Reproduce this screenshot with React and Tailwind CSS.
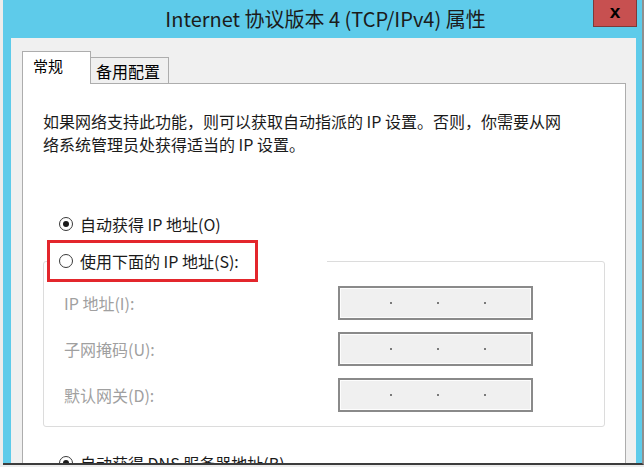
import React from 'react';

const font = { fontFamily: '"Noto Sans CJK SC", "Noto Sans", sans-serif' };

const Radio = ({ checked }) => (
  <span className="w-[14px] h-[14px] rounded-full border border-[#3a3a3a] bg-white flex items-center justify-center shrink-0">
    {checked && <span className="w-[6px] h-[6px] rounded-full bg-[#1a1a1a]"></span>}
  </span>
);

const IpBox = () => (
  <div className="w-[195px] h-[34px] border-2 border-[#8a8a8a] bg-[#f0f0f0] shadow-[inset_0_0_0_1px_#fdfdfd] flex items-center pl-[50px] gap-[45px]">
    <span className="w-[2px] h-[2px] bg-[#7a7a7a]"></span>
    <span className="w-[2px] h-[2px] bg-[#7a7a7a]"></span>
    <span className="w-[2px] h-[2px] bg-[#7a7a7a]"></span>
  </div>
);

export default function App() {
  const fields = ['IP 地址(I):', '子网掩码(U):', '默认网关(D):'];

  return (
    <div className="w-[644px] h-[467px] bg-[#ececec] flex flex-col pl-[3px] pb-[2px]" style={font}>
      <div className="flex-1 min-h-0 flex flex-col bg-[#5ecbea] border-b-2 border-r-2 border-b-[#3c3c3c] border-r-[#8f8f8f] overflow-hidden">
        {/* title bar */}
        <div className="h-[38px] shrink-0 grid grid-cols-[1fr_auto_1fr]">
          <div></div>
          <div className="flex items-center text-[20px] text-[#1b1b1b] pl-[6px]">Internet 协议版本 4 (TCP/IPv4) 属性</div>
          <div className="flex justify-end items-start pr-[5px]">
            <div className="w-[44px] h-[27px] bg-[#c75050] border border-t-0 border-[#7d3a3a] flex items-center justify-center text-[19px] font-bold text-black leading-none pb-[3px]" style={{ fontFamily: '"Liberation Sans", sans-serif' }}>x</div>
          </div>
        </div>

        {/* window body */}
        <div className="flex-1 min-h-0 ml-[8px] mr-[6px] bg-[#f0f0f0] pt-[13px] pl-[11px] pr-[10px] flex flex-col overflow-hidden">
          <div className="flex items-end -mb-px">
            <div className="relative z-10 w-[69px] h-[33px] bg-white border border-b-0 border-[#adadad] pl-[10px] pt-[3px] text-[15px] text-black">常规</div>
            <div className="w-[78px] h-[27px] bg-[#f0f0f0] border border-l-0 border-[#adadad] pl-[5px] pt-[1px] text-[16px] text-black">备用配置</div>
          </div>

          <div className="flex-1 bg-white border border-[#adadad] pt-[26px] pl-[20px] pr-[20px] text-[16px] text-[#1a1a1a]">
            <p className="leading-[23px]">
              如果网络支持此功能，则可以获取自动指派的 IP 设置。否则，你需要从网
              <br />
              络系统管理员处获得适当的 IP 设置。
            </p>

            <div className="mt-[56px] h-[24px] flex items-center gap-[7px] pl-[16px]">
              <Radio checked />
              <span>自动获得 IP 地址(O)</span>
            </div>

            <fieldset className="mt-[4px] border border-[#dcdcdc] rounded-[3px]">
              <legend className="ml-[3px] w-[280px]">
                <div className="w-[211px] h-[42px] border-[3px] border-[#e3262c] flex items-center gap-[7px] pl-[9px]">
                  <Radio />
                  <span>使用下面的 IP 地址(S):</span>
                </div>
              </legend>
              <div className="flex flex-col gap-[12px] pt-[4px] pl-[20px] pb-[14px]">
                {fields.map((f) => (
                  <div key={f} className="flex items-center">
                    <span className="w-[274px] text-[#a0a0a0]">{f}</span>
                    <IpBox />
                  </div>
                ))}
              </div>
            </fieldset>

            <div className="mt-[24px] h-[24px] flex items-center gap-[7px] pl-[16px]">
              <Radio checked />
              <span>自动获得 DNS 服务器地址(B)</span>
            </div>
          </div>
        </div>
      </div>
    </div>
  );
}
